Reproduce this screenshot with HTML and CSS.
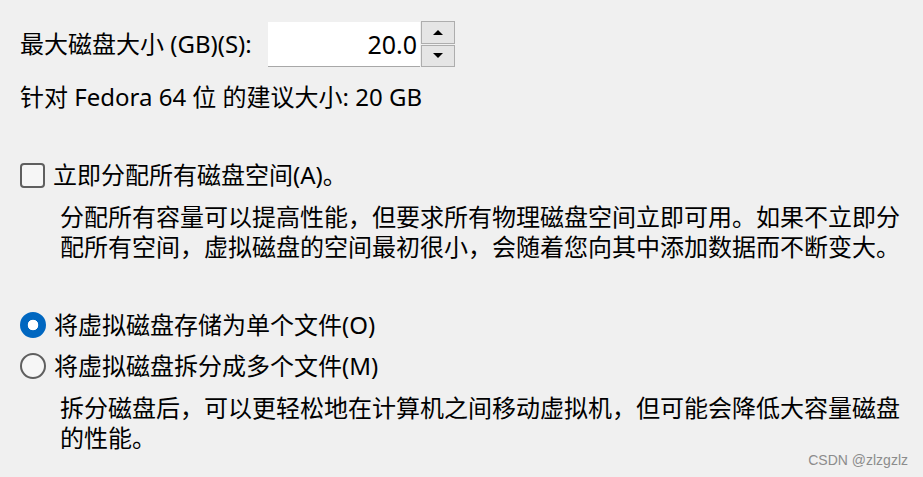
FILE: index.html
```html
<!DOCTYPE html>
<html lang="zh-CN">
<head>
<meta charset="utf-8">
<title>磁盘大小</title>
<link rel="stylesheet" href="styles.css">
</head>
<body>
<div class="page">
  <div class="size-row">
    <span class="size-label">最大磁盘大小 (GB)(S):</span>
    <div class="spinner">
      <div class="spin-value">20.0</div>
      <div class="spin-buttons">
        <div class="spin-btn"><span class="tri tri-up"></span></div>
        <div class="spin-btn"><span class="tri tri-down"></span></div>
      </div>
    </div>
  </div>
  <div class="recommend">针对 Fedora 64 位 的建议大小: 20 GB</div>

  <div class="option option-check">
    <span class="checkbox"></span>
    <span class="opt-label">立即分配所有磁盘空间(A)。</span>
  </div>
  <div class="desc desc-first">分配所有容量可以提高性能，但要求所有物理磁盘空间立即可用。如果不立即分<br>配所有空间，虚拟磁盘的空间最初很小，会随着您向其中添加数据而不断变大。</div>

  <div class="option option-radio1">
    <span class="radio radio-on"></span>
    <span class="opt-label">将虚拟磁盘存储为单个文件(O)</span>
  </div>
  <div class="option option-radio2">
    <span class="radio"></span>
    <span class="opt-label">将虚拟磁盘拆分成多个文件(M)</span>
  </div>
  <div class="desc desc-second">拆分磁盘后，可以更轻松地在计算机之间移动虚拟机，但可能会降低大容量磁盘<br>的性能。</div>
</div>
<div class="watermark">CSDN @zlzgzlz</div>
</body>
</html>
```

FILE: styles.css
```css
html, body {
  margin: 0;
  padding: 0;
  background: #f0f0f0;
}
body {
  width: 923px;
  height: 477px;
  position: relative;
  overflow: hidden;
  font-family: "Noto Sans", "Noto Sans CJK SC", sans-serif;
  font-size: 24px;
  color: #000;
}
.page {
  display: flex;
  flex-direction: column;
  padding: 21px 0 0 20px;
}
.size-row {
  display: flex;
  align-items: center;
  height: 46px;
}
.size-label {
  width: 248px;
  line-height: 30px;
  white-space: nowrap;
}
.spinner {
  display: flex;
  height: 46px;
}
.spin-value {
  width: 149px;
  height: 44px;
  margin-top: 1px;
  background: #fff;
  border-bottom: 1px solid #a8a8a8;
  text-align: right;
  line-height: 44px;
  padding-right: 3px;
  font-size: 25px;
}
.spin-buttons {
  display: flex;
  flex-direction: column;
  gap: 1px;
  margin-left: 1px;
}
.spin-btn {
  width: 32px;
  height: 21px;
  border: 1px solid #adadad;
  background: #e5e5e5;
  display: flex;
  align-items: center;
  justify-content: center;
}
.tri {
  width: 0;
  height: 0;
  border-left: 5px solid transparent;
  border-right: 5px solid transparent;
}
.tri-up {
  border-bottom: 5px solid #000;
}
.tri-down {
  border-top: 5px solid #000;
}
.recommend {
  margin-top: 15px;
  line-height: 30px;
  white-space: nowrap;
}
.option {
  display: flex;
  align-items: center;
  height: 30px;
  white-space: nowrap;
}
.option-check {
  margin-top: 48px;
}
.option-radio1 {
  margin-top: 48px;
}
.option-radio2 {
  margin-top: 11px;
}
.opt-label {
  margin-left: 8px;
  line-height: 30px;
}
.checkbox {
  width: 21px;
  height: 21px;
  border: 2px solid #5f5f5f;
  border-radius: 4px;
  background: #f6f6f6;
  flex: none;
}
.radio {
  width: 22px;
  height: 22px;
  border: 2px solid #5f5f5f;
  border-radius: 50%;
  background: #f6f6f6;
  flex: none;
}
.radio-on {
  border-color: #0067c0;
  background: radial-gradient(circle, #fff 0, #fff 5px, #0067c0 5.6px);
}
.desc {
  margin-top: 12px;
  padding-left: 40px;
  line-height: 30px;
  white-space: nowrap;
}
.watermark {
  position: absolute;
  right: 15px;
  bottom: 9px;
  font-family: "Liberation Sans", Arial, sans-serif;
  font-size: 14px;
  color: #8c8c8c;
}
```
